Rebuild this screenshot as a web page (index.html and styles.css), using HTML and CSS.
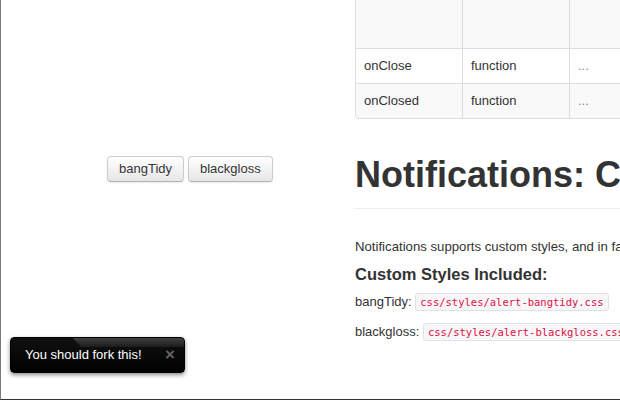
FILE: index.html
```html
<!DOCTYPE html>
<html>
<head>
<meta charset="utf-8">
<link rel="stylesheet" href="styles.css">
</head>
<body>
<div class="page">
  <aside class="demo">
    <div class="btns">
      <button class="btn">bangTidy</button>
      <button class="btn">blackgloss</button>
    </div>
  </aside>
  <main class="docs">
    <table class="opts">
      <tr class="odd tall"><td class="c1">closing</td><td class="c2">type</td><td class="c3"></td></tr>
      <tr><td>onClose</td><td>function</td><td class="muted">...</td></tr>
      <tr class="odd"><td>onClosed</td><td>function</td><td class="muted">...</td></tr>
    </table>
    <h1 class="title">Notifications: Custom Styles</h1>
    <hr class="rule">
    <p class="lead">Notifications supports custom styles, and in fact comes with a few!</p>
    <h3 class="sub">Custom Styles Included:</h3>
    <p class="style-line first">bangTidy: <code>css/styles/alert-bangtidy.css</code></p>
    <p class="style-line">blackgloss: <code>css/styles/alert-blackgloss.css</code></p>
  </main>
  <div class="notify">You should fork this!<span class="close">×</span></div>
</div>
</body>
</html>
```

FILE: styles.css
```css
html, body {
  margin: 0;
  padding: 0;
  background: #fff;
}
body {
  font-family: "Liberation Sans", Arial, sans-serif;
  font-size: 13px;
  line-height: 18px;
  color: #333;
}
.page {
  position: relative;
  height: 400px;
  width: 620px;
  box-sizing: border-box;
  border-left: 1px solid #7a7a7a;
  border-bottom: 1px solid #333;
  display: flex;
  overflow: hidden;
}
.demo {
  flex: none;
  width: 354px;
  box-sizing: border-box;
  padding: 156px 0 0 106px;
}
.btns {
  display: flex;
  gap: 4px;
}
.btn {
  font-family: "Liberation Sans", Arial, sans-serif;
  font-size: 13px;
  line-height: 18px;
  color: #333;
  padding: 3px 11px;
  border: 1px solid #ccc;
  border-bottom-color: #b3b3b3;
  border-radius: 4px;
  background: linear-gradient(#ffffff, #e6e6e6);
  box-shadow: inset 0 1px 0 rgba(255,255,255,.2), 0 1px 2px rgba(0,0,0,.08);
  text-shadow: 0 1px 1px rgba(255,255,255,.75);
  margin: 0;
}
.docs {
  flex: 1;
  min-width: 0;
  overflow: hidden;
  white-space: nowrap;
}
.opts {
  margin-top: -25px;
  width: 640px;
  table-layout: fixed;
  border-collapse: separate;
  border-spacing: 0;
  border: 1px solid #ddd;
  border-left: 0;
  border-radius: 0 0 4px 4px;
}
.opts td {
  box-sizing: border-box;
  padding: 8px;
  border-left: 1px solid #ddd;
  border-top: 1px solid #ddd;
  vertical-align: top;
  text-align: left;
}
.opts tr.tall td {
  border-top: 0;
  height: 72px;
}
.opts td.c1, .opts td.c2 { width: 107px; }
.opts tr.odd td { background: #f9f9f9; }
.opts tr:last-child td:first-child { border-bottom-left-radius: 4px; }
.muted { color: #888; }
.title {
  margin: 36px 0 0;
  font-size: 36px;
  line-height: 40px;
  font-weight: bold;
  color: #333;
}
.rule {
  margin: 13px 0 0;
  border: 0;
  border-top: 1px solid #eee;
}
.lead {
  margin: 29px 0 0;
  font-size: 13.2px;
}
.sub {
  margin: 8px 0 0;
  font-size: 16.5px;
  line-height: 20px;
  font-weight: bold;
}
.style-line {
  margin: 12px 0 0;
}
.style-line.first { margin-top: 9px; }
code {
  font-family: "DejaVu Sans Mono", "Liberation Mono", monospace;
  font-size: 10.5px;
  padding: 2px 4px;
  color: #d14;
  background: #f7f7f9;
  border: 1px solid #e1e1e8;
  border-radius: 3px;
}
.notify {
  position: absolute;
  left: 9px;
  top: 337px;
  width: 175px;
  box-sizing: border-box;
  padding: 8px 14px;
  color: #fff;
  background: linear-gradient(#111, #000);
  border: 1px solid #000;
  border-radius: 4px;
  box-shadow: 0 2px 4px rgba(0,0,0,.45);
  overflow: hidden;
  display: flex;
  justify-content: space-between;
  align-items: center;
}
.notify::before {
  content: "";
  position: absolute;
  left: 62px;
  right: 0;
  top: 0;
  height: 9px;
  background: linear-gradient(rgba(255,255,255,.2), rgba(255,255,255,.06));
  clip-path: polygon(0 0, 100% 0, 100% 100%, 8px 100%);
}
.close {
  position: relative;
  color: #666;
  font-size: 17px;
  font-weight: bold;
  line-height: 18px;
  margin-right: -5px;
}
```
